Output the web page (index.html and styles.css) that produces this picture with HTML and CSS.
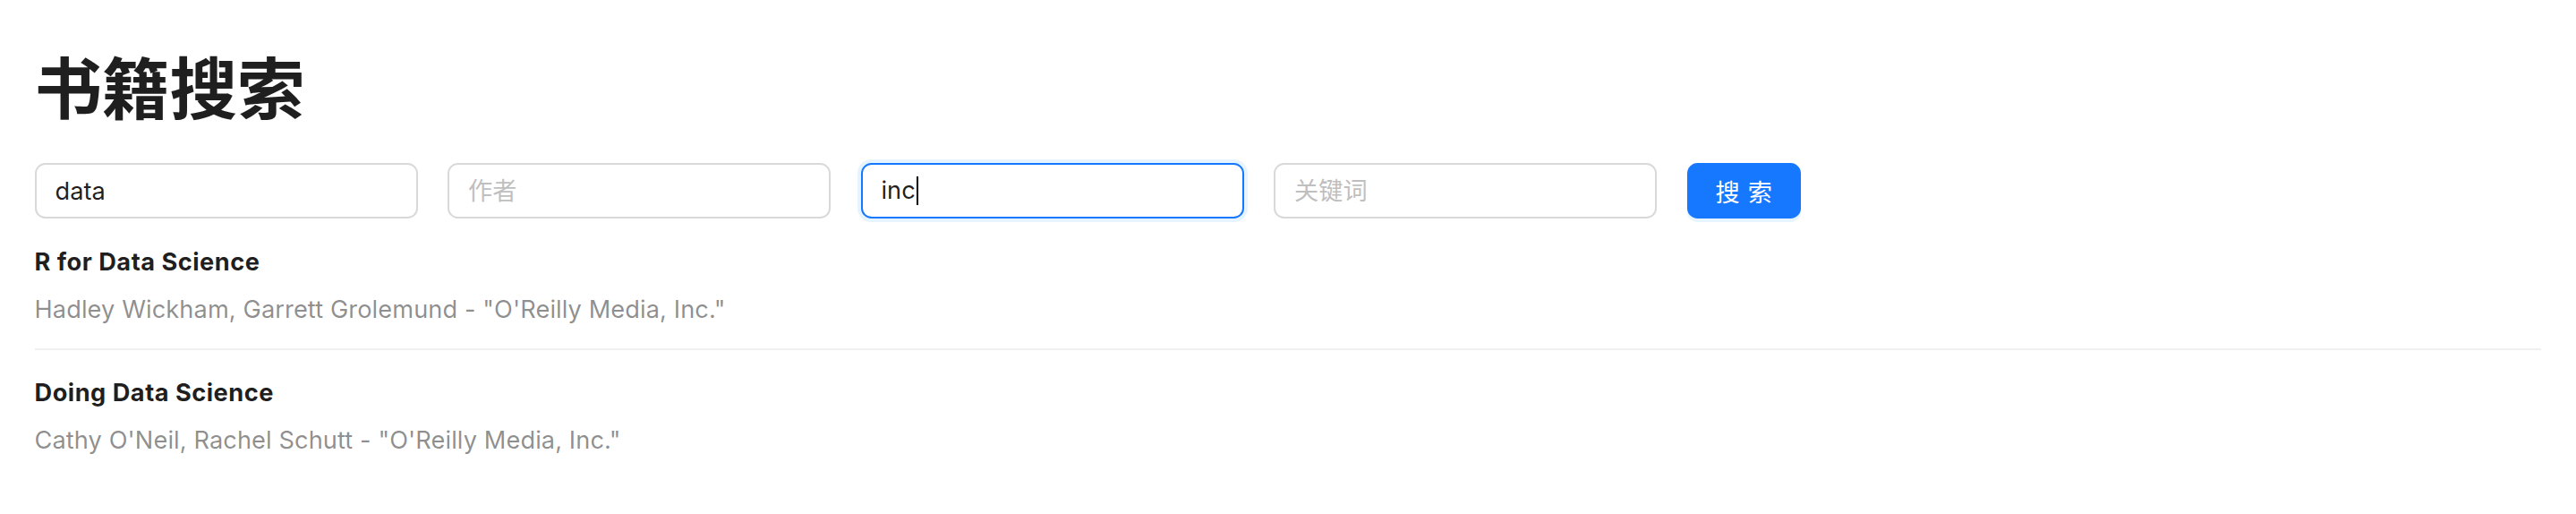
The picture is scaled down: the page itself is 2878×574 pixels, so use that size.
FILE: index.html
```html
<!DOCTYPE html>
<html lang="zh-CN">
<head>
<meta charset="utf-8">
<title>书籍搜索</title>
<link rel="stylesheet" href="styles.css">
</head>
<body>
<main class="page">
  <h1 class="title">书籍搜索</h1>
  <form class="search-row">
    <input class="field" type="text" value="data" placeholder="书名">
    <input class="field" type="text" placeholder="作者">
    <div class="field field-focused" role="textbox"><span class="field-value">inc</span><span class="caret"></span></div>
    <input class="field" type="text" placeholder="关键词">
    <button class="btn-primary" type="button"><span class="btn-label">搜索</span></button>
  </form>
  <ul class="results">
    <li class="result">
      <div class="result-title">R for Data Science</div>
      <div class="result-desc">Hadley Wickham, Garrett Grolemund - "O'Reilly Media, Inc."</div>
    </li>
    <li class="result">
      <div class="result-title">Doing Data Science</div>
      <div class="result-desc">Cathy O'Neil, Rachel Schutt - "O'Reilly Media, Inc."</div>
    </li>
  </ul>
</main>
</body>
</html>
```
FILE: styles.css
```css
* { box-sizing: border-box; }

html, body {
  margin: 0;
  background: #ffffff;
}

body {
  font-family: Inter, "Noto Sans CJK SC", sans-serif;
  color: rgba(0, 0, 0, 0.88);
}

.page {
  padding: 48px 39px 0 38.5px;
}

.title {
  margin: 0 0 42px 0;
  font-family: "Noto Sans CJK SC", sans-serif;
  font-size: 75.5px;
  font-weight: 700;
  line-height: 92px;
  color: rgba(0, 0, 0, 0.88);
}

.search-row {
  display: flex;
  align-items: center;
  gap: 33.5px;
  margin: 0 0 2px 0;
}

.field {
  display: flex;
  align-items: center;
  width: 428px;
  height: 62px;
  padding: 0 21px;
  border: 2px solid #d9d9d9;
  border-radius: 11.6px;
  background: #ffffff;
  font-family: Inter, "Noto Sans CJK SC", sans-serif;
  font-size: 27.2px;
  color: rgba(0, 0, 0, 0.88);
  outline: none;
}

.field::placeholder {
  color: #bfbfbf;
  font-family: "Noto Sans CJK SC", sans-serif;
}

.field-focused {
  border-color: #1677ff;
  box-shadow: 0 0 0 4px rgba(5, 145, 255, 0.1);
}

.field-value {
  line-height: 1;
}

.caret {
  display: inline-block;
  width: 2px;
  height: 32px;
  margin-left: 1px;
  background: #000000;
}

.btn-primary {
  width: 127.5px;
  height: 62px;
  padding: 0;
  border: none;
  border-radius: 11.6px;
  background: #1677ff;
  box-shadow: 0 4px 0 rgba(5, 145, 255, 0.1);
  color: #ffffff;
  font-family: "Noto Sans CJK SC", sans-serif;
  font-size: 27.2px;
  cursor: pointer;
}

.btn-label {
  letter-spacing: 0.34em;
  margin-right: -0.34em;
}

.results {
  list-style: none;
  margin: 0;
  padding: 0;
}

.result {
  padding: 26px 0 22px 0;
  border-bottom: 2px solid rgba(5, 5, 5, 0.06);
}

.result + .result {
  padding-top: 27px;
}

.result:last-child {
  border-bottom: none;
}

.result-title {
  margin-bottom: 9.8px;
  font-size: 27.2px;
  font-weight: 700;
  line-height: 42.7px;
  letter-spacing: 0.5px;
  color: rgba(0, 0, 0, 0.88);
}

.result-desc {
  font-size: 27.2px;
  line-height: 42.7px;
  letter-spacing: 0.1px;
  color: rgba(0, 0, 0, 0.45);
}
```
